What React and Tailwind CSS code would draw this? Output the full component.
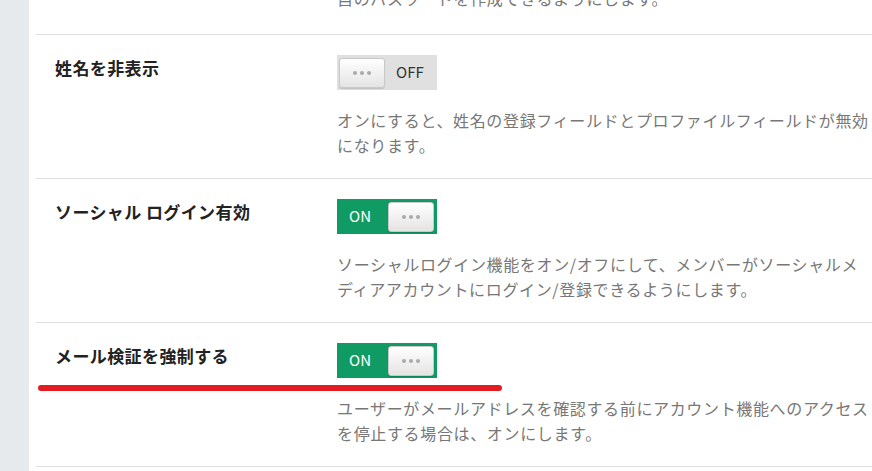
import React from 'react';

const font = { fontFamily: '"Noto Sans CJK JP", "Noto Sans", sans-serif' };

function Knob() {
  return (
    <div className="flex h-[30px] w-[46px] items-center justify-center gap-[3px] rounded-[3px] border border-[#c9c9c9] bg-gradient-to-b from-[#ffffff] to-[#e4e4e4] shadow-[0_1px_1px_rgba(0,0,0,0.15)]">
      <span className="h-[4px] w-[4px] rounded-full bg-[#aaaaaa]" />
      <span className="h-[4px] w-[4px] rounded-full bg-[#aaaaaa]" />
      <span className="h-[4px] w-[4px] rounded-full bg-[#aaaaaa]" />
    </div>
  );
}

function Toggle({ on }) {
  if (on) {
    return (
      <div className="flex h-[35px] w-[100px] items-center justify-between bg-[#0f9b63] pl-[12px] pr-[3px]">
        <span className="text-[15px] text-white" style={font}>ON</span>
        <Knob />
      </div>
    );
  }
  return (
    <div className="flex h-[35px] w-[100px] items-center bg-[#e0e0e0] pl-[2px]">
      <Knob />
      <span className="ml-[11px] text-[15px] text-[#333]" style={font}>OFF</span>
    </div>
  );
}

function Row({ label, on, lines }) {
  return (
    <div className="flex border-b border-[#e0e0e0] pt-[20px] pb-[20px]">
      <div className="w-[301px] pl-[19px] text-[17px] font-bold leading-[25px] tracking-[0.4px] text-[#222]">
        {label}
      </div>
      <div>
        <Toggle on={on} />
        <div className="mt-[18px] text-[16px] leading-[25px] tracking-[0.65px] text-[#777]">
          {lines.map((l) => (
            <div key={l} className="whitespace-nowrap">{l}</div>
          ))}
        </div>
      </div>
    </div>
  );
}

export default function App() {
  return (
    <div className="relative flex h-[471px] w-[872px] overflow-hidden bg-white" style={font}>
      <div className="w-[29px] shrink-0 bg-[#e7eaed]" />
      <div className="flex-1 pl-[7px]">
        <div className="h-[35px] overflow-hidden border-b border-[#e0e0e0] pl-[301px]">
          <div className="mt-[-14px] text-[16px] leading-[25px] tracking-[0.65px] text-[#777]">
            自のパスワードを作成できるようにします。
          </div>
        </div>
        <Row
          label="姓名を非表示"
          on={false}
          lines={[
            'オンにすると、姓名の登録フィールドとプロファイルフィールドが無効',
            'になります。',
          ]}
        />
        <Row
          label="ソーシャル ログイン有効"
          on={true}
          lines={[
            'ソーシャルログイン機能をオン/オフにして、メンバーがソーシャルメ',
            'ディアアカウントにログイン/登録できるようにします。',
          ]}
        />
        <Row
          label="メール検証を強制する"
          on={true}
          lines={[
            'ユーザーがメールアドレスを確認する前にアカウント機能へのアクセス',
            'を停止する場合は、オンにします。',
          ]}
        />
      </div>
      {/* red annotation underline */}
      <div className="absolute left-[38px] top-[385px] h-[6px] w-[464px] rounded-full bg-[#e31b23]" />
    </div>
  );
}
